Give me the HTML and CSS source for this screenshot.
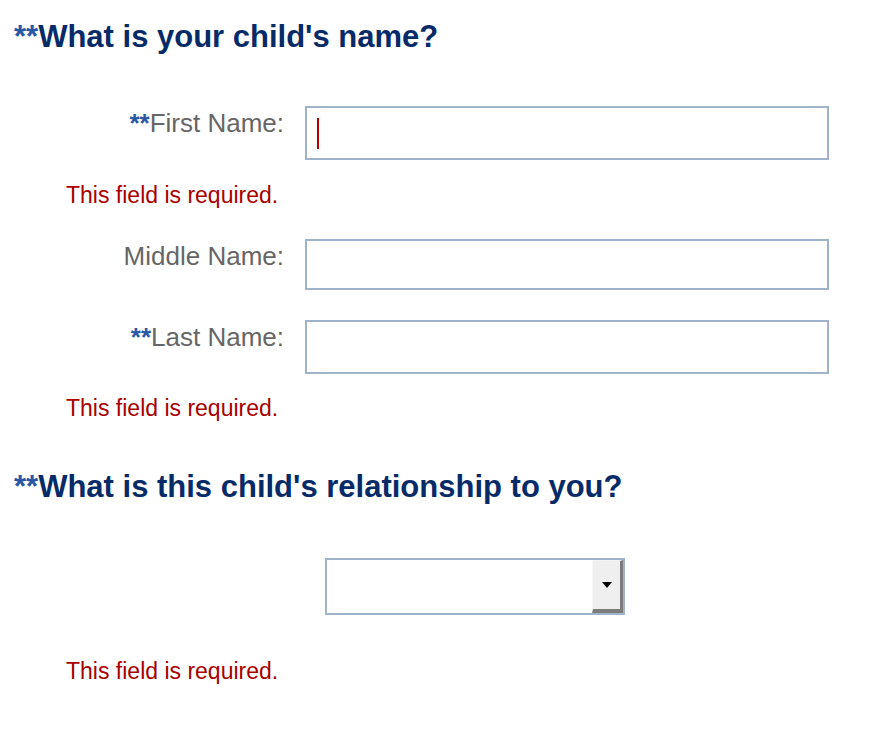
FILE: index.html
```html
<!DOCTYPE html>
<html lang="en">
<head>
<meta charset="utf-8">
<title>Child details</title>
<link rel="stylesheet" href="styles.css">
</head>
<body>
<form class="form">
  <h2 class="question"><span class="req">**</span>What is your child's name?</h2>

  <div class="row row-first">
    <label class="label" for="first"><span class="req-sm">**</span>First Name:</label>
    <div class="field field-tall">
      <span class="caret"></span>
      <input class="input" id="first" type="text">
    </div>
  </div>
  <p class="error error-1">This field is required.</p>

  <div class="row row-middle">
    <label class="label" for="middle">Middle Name:</label>
    <div class="field field-short">
      <input class="input" id="middle" type="text">
    </div>
  </div>

  <div class="row row-last">
    <label class="label" for="last"><span class="req-sm">**</span>Last Name:</label>
    <div class="field field-tall">
      <input class="input" id="last" type="text">
    </div>
  </div>
  <p class="error error-2">This field is required.</p>

  <h2 class="question question-2"><span class="req">**</span>What is this child's relationship to you?</h2>

  <div class="select-wrap">
    <select class="select" aria-label="Relationship"><option></option></select>
    <span class="select-btn"><span class="arrow"></span></span>
  </div>
  <p class="error error-3">This field is required.</p>
</form>
</body>
</html>
```

FILE: styles.css
```css
html, body {
  margin: 0;
  padding: 0;
  background: #ffffff;
}

body {
  font-family: "Liberation Sans", Arial, Helvetica, sans-serif;
}

.form {
  display: flex;
  flex-direction: column;
  align-items: flex-start;
  padding-top: 19px;
}

.question {
  margin: 0 0 0 14px;
  font-size: 31px;
  line-height: 36px;
  font-weight: bold;
  color: #062b68;
}

.req {
  color: #2857a3;
}

.req-sm {
  color: #2857a3;
  font-weight: bold;
}

.row {
  display: flex;
  align-items: flex-start;
}

.row-first { margin-top: 51px; }
.row-middle { margin-top: 31px; }
.row-last { margin-top: 30px; }

.label {
  width: 284px;
  text-align: right;
  padding-top: 2px;
  font-size: 26px;
  line-height: 30px;
  color: #666666;
}

.field {
  margin-left: 21px;
  width: 524px;
  box-sizing: border-box;
  border: 2px solid #9fb4cb;
  background: #ffffff;
  display: flex;
  align-items: center;
}

.field-tall { height: 54px; }
.field-short { height: 51px; }

.caret {
  width: 2px;
  height: 31px;
  margin-left: 10px;
  background: #b00000;
  flex: none;
}

.input {
  flex: 1;
  min-width: 0;
  height: 100%;
  border: 0;
  outline: none;
  padding: 0 10px;
  font-family: inherit;
  font-size: 22px;
  background: transparent;
}

.error {
  margin: 0 0 0 66px;
  font-size: 23px;
  line-height: 26px;
  color: #a80000;
}

.error-1 { margin-top: 22px; }
.error-2 { margin-top: 21px; }
.error-3 { margin-top: 43px; }

.question-2 { margin-top: 48px; }

.select-wrap {
  margin: 53px 0 0 325px;
  width: 300px;
  height: 57px;
  box-sizing: border-box;
  border: 2px solid #9fb4cb;
  background: #ffffff;
  display: flex;
  align-items: stretch;
}

.select {
  flex: 1;
  min-width: 0;
  border: 0;
  outline: none;
  background: transparent;
  -webkit-appearance: none;
  appearance: none;
  font-family: inherit;
  font-size: 20px;
}

.select-btn {
  width: 31px;
  box-sizing: border-box;
  background: #efefef;
  border-top: 1px solid #f4f4f4;
  border-left: 1px solid #f8f8f8;
  border-right: 3px solid #7c7c7c;
  border-bottom: 4px solid #7c7c7c;
  display: flex;
  align-items: center;
  justify-content: center;
}

.arrow {
  width: 0;
  height: 0;
  border-left: 5px solid transparent;
  border-right: 5px solid transparent;
  border-top: 6px solid #000000;
}
```
